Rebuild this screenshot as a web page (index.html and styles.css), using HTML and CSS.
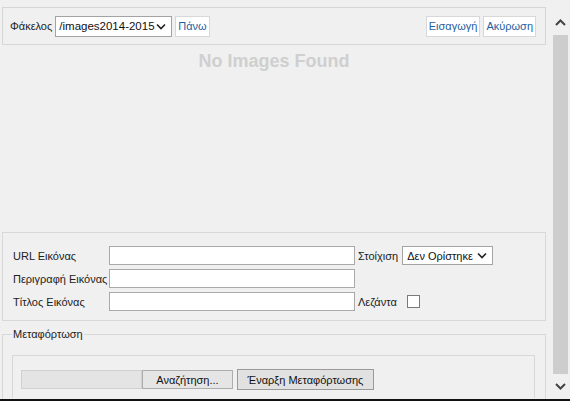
FILE: index.html
```html
<!DOCTYPE html>
<html lang="el">
<head>
<meta charset="utf-8">
<title>Εικόνες</title>
<link rel="stylesheet" href="styles.css">
</head>
<body>
<div class="window">
  <div class="content">
    <div class="toolbar">
      <div class="tb-left">
        <span class="lbl">Φάκελος</span>
        <div class="select folder-select">
          <span class="sel-text">/images2014-2015</span>
          <svg class="chev" width="10" height="7" viewBox="0 0 10 7"><path d="M1 1.5 L5 5.5 L9 1.5" fill="none" stroke="#222" stroke-width="1.6"/></svg>
        </div>
        <button class="btn-link">Πάνω</button>
      </div>
      <div class="tb-right">
        <button class="btn-link">Εισαγωγή</button>
        <button class="btn-link">Ακύρωση</button>
      </div>
    </div>

    <div class="images">
      <div class="empty">No Images Found</div>
    </div>

    <div class="props">
      <div class="row">
        <span class="plabel">URL Εικόνας</span>
        <span class="input wide"></span>
        <span class="rlabel">Στοίχιση</span>
        <div class="select align-select">
          <span class="sel-text">Δεν Ορίστηκε</span>
          <svg class="chev" width="10" height="7" viewBox="0 0 10 7"><path d="M1 1.5 L5 5.5 L9 1.5" fill="none" stroke="#222" stroke-width="1.6"/></svg>
        </div>
      </div>
      <div class="row">
        <span class="plabel">Περιγραφή Εικόνας</span>
        <span class="input wide"></span>
      </div>
      <div class="row">
        <span class="plabel">Τίτλος Εικόνας</span>
        <span class="input wide"></span>
        <span class="rlabel">Λεζάντα</span>
        <span class="checkbox"></span>
      </div>
    </div>

    <fieldset class="upload">
      <legend>Μεταφόρτωση</legend>
      <div class="upload-box">
        <div class="file">
          <span class="file-name"></span>
          <span class="file-btn">Αναζήτηση...</span>
        </div>
        <button class="btn-sys">Έναρξη Μεταφόρτωσης</button>
      </div>
    </fieldset>
  </div>

  <div class="scrollbar">
    <div class="sb-arrow up">
      <svg width="11" height="7" viewBox="0 0 11 7"><path d="M1 6 L5.5 1.5 L10 6" fill="none" stroke="#444" stroke-width="2"/></svg>
    </div>
    <div class="sb-track"><div class="sb-thumb"></div></div>
    <div class="sb-arrow down">
      <svg width="11" height="7" viewBox="0 0 11 7"><path d="M1 1 L5.5 5.5 L10 1" fill="none" stroke="#444" stroke-width="2"/></svg>
    </div>
  </div>
</div>
</body>
</html>
```
FILE: styles.css
```css
html, body {
  margin: 0;
  padding: 0;
}
body {
  width: 570px;
  height: 401px;
  overflow: hidden;
  background: #f0f0f0;
  font-family: "Liberation Sans", Arial, sans-serif;
  font-size: 11px;
  color: #222;
}
.window {
  display: flex;
  height: 399px;
  border-bottom: 2px solid #111;
}
.content {
  width: 553px;
  padding: 7px 0 0 2px;
  box-sizing: border-box;
  display: flex;
  flex-direction: column;
}
.toolbar {
  width: 544px;
  height: 38px;
  box-sizing: border-box;
  border: 1px solid #d6d6d6;
  display: flex;
  align-items: center;
  justify-content: space-between;
  padding: 0 9px 0 7px;
}
.tb-left, .tb-right {
  display: flex;
  align-items: center;
  gap: 3px;
}
.lbl {
  margin-right: 0;
}
.select {
  display: flex;
  align-items: center;
  justify-content: space-between;
  background: #fff;
  border: 1px solid #a3a3a3;
  box-sizing: border-box;
  padding: 0 5px 0 4px;
  color: #111;
  white-space: nowrap;
}
.folder-select {
  width: 117px;
  height: 21px;
  font-size: 11.5px;
  padding-left: 3px;
}
.align-select {
  width: 91px;
  height: 19px;
}
.btn-link {
  font: inherit;
  height: 21px;
  padding: 0 2px;
  background: #fff;
  border: 1px solid #d8d8d8;
  color: #1f5f9f;
}
.images {
  height: 187px;
  display: flex;
  justify-content: center;
  width: 544px;
}
.empty {
  margin-top: 6px;
  font-weight: bold;
  font-size: 18px;
  color: #cfcfcf;
  height: 20px;
}
.props {
  width: 544px;
  height: 89px;
  box-sizing: border-box;
  border: 1px solid #d8d8d8;
  padding: 13px 0 0 10px;
  display: flex;
  flex-direction: column;
  gap: 4px;
}
.row {
  display: flex;
  align-items: center;
  height: 19px;
}
.plabel {
  width: 96px;
}
.input {
  display: block;
  height: 19px;
  box-sizing: border-box;
  background: #fff;
  border: 1px solid #a9a9a9;
}
.wide {
  width: 246px;
}
.rlabel {
  margin-left: 3px;
  margin-right: 4px;
}
.checkbox {
  width: 13px;
  height: 13px;
  box-sizing: border-box;
  background: #fff;
  border: 1px solid #7a7a7a;
  margin-left: 6px;
}
.upload {
  width: 544px;
  box-sizing: border-box;
  margin: 7px 0 0;
  padding: 15px 9px 0 9px;
  border: 1px solid #d8d8d8;
  border-bottom: none;
  flex: 1;
  min-height: 0;
}
.upload legend {
  padding: 0 1px;
  margin-left: 0;
}
.upload-box {
  height: 43px;
  border: 1px solid #d8d8d8;
  border-bottom: none;
  margin-right: 1px;
  display: flex;
  align-items: center;
  padding: 5px 0 0 8px;
  box-sizing: border-box;
}
.file {
  display: flex;
  height: 19px;
}
.file-name {
  width: 121px;
  background: #e4e4e4;
  border: 1px solid #d0d0d0;
  box-sizing: border-box;
}
.file-btn {
  width: 91px;
  box-sizing: border-box;
  background: #e5e5e5;
  border: 1px solid #adadad;
  display: flex;
  align-items: center;
  justify-content: center;
  color: #111;
}
.btn-sys {
  font: inherit;
  margin-left: 4px;
  height: 21px;
  width: 137px;
  padding: 0;
  background: #e1e1e1;
  border: 1px solid #9a9a9a;
  color: #111;
}
.scrollbar {
  width: 17px;
  display: flex;
  flex-direction: column;
  padding-top: 10px;
  box-sizing: border-box;
}
.sb-arrow {
  height: 25px;
  display: flex;
  align-items: center;
  justify-content: center;
  padding-right: 2px;
}
.sb-track {
  flex: 1;
  padding-right: 2px;
}
.sb-thumb {
  height: 100%;
  background: #cdcdcd;
}
```
